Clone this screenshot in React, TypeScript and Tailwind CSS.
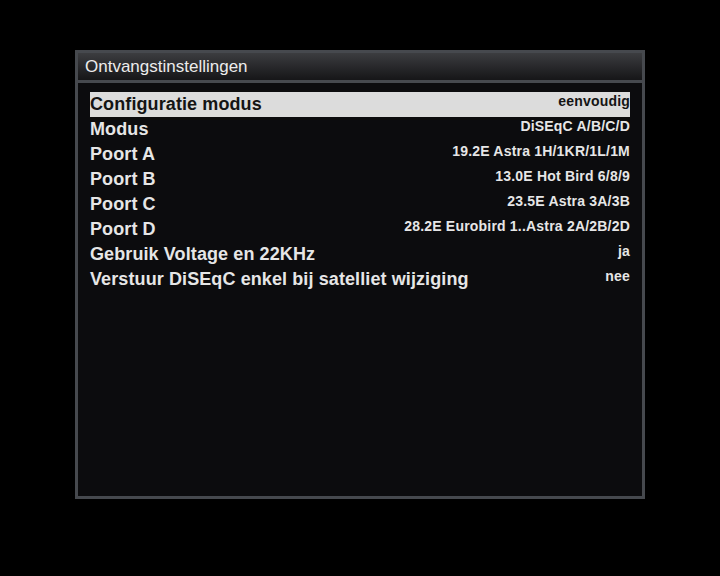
const rows = [
  { label: "Configuratie modus", value: "eenvoudig", selected: true },
  { label: "Modus", value: "DiSEqC A/B/C/D" },
  { label: "Poort A", value: "19.2E Astra 1H/1KR/1L/1M" },
  { label: "Poort B", value: "13.0E Hot Bird 6/8/9" },
  { label: "Poort C", value: "23.5E Astra 3A/3B" },
  { label: "Poort D", value: "28.2E Eurobird 1..Astra 2A/2B/2D" },
  { label: "Gebruik Voltage en 22KHz", value: "ja" },
  { label: "Verstuur DiSEqC enkel bij satelliet wijziging", value: "nee" },
];

export default function App() {
  return (
    <div className="w-[720px] h-[576px] bg-black pl-[75px] pt-[50px] font-['Liberation_Sans',Arial,sans-serif]">
      <div className="w-[570px] h-[449px] border-[3px] border-[#46494e] flex flex-col bg-[#0c0c0e]">
        {/* title bar */}
        <div className="h-[30px] bg-gradient-to-b from-[#3c3d40] to-[#161618] text-[#ececec] text-[17px] pl-[7px] pt-[1px] flex items-center border-b-[3px] border-[#46494e]">
          Ontvangstinstellingen
        </div>
        <div className="flex-1 pt-[9px] pl-[12px] pr-[12px]">
          {rows.map((r) => (
            <div
              key={r.label}
              className={
                "h-[25px] flex justify-between " +
                (r.selected ? "bg-[#dcdcdc] text-[#141414]" : "text-[#e6e6e6]")
              }
            >
              <span className="text-[18px] font-bold leading-[25px] tracking-[0.1px]">{r.label}</span>
              <span className="text-[14px] font-bold leading-[16px] mt-[1px] tracking-[0.2px]">{r.value}</span>
            </div>
          ))}
        </div>
      </div>
    </div>
  );
}
